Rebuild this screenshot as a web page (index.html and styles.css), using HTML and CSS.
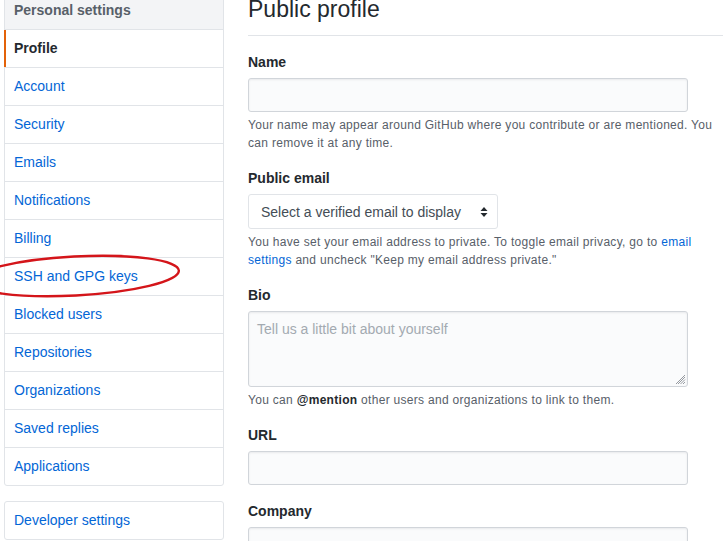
FILE: index.html
```html
<!DOCTYPE html>
<html lang="en">
<head>
<meta charset="utf-8">
<title>Public profile</title>
<link rel="stylesheet" href="styles.css">
</head>
<body>
<div class="page">
  <aside class="sidebar">
    <nav class="menu">
      <div class="menu-heading">Personal settings</div>
      <a class="menu-item selected" href="#">Profile</a>
      <a class="menu-item" href="#">Account</a>
      <a class="menu-item" href="#">Security</a>
      <a class="menu-item" href="#">Emails</a>
      <a class="menu-item" href="#">Notifications</a>
      <a class="menu-item" href="#">Billing</a>
      <a class="menu-item" href="#">SSH and GPG keys</a>
      <a class="menu-item" href="#">Blocked users</a>
      <a class="menu-item" href="#">Repositories</a>
      <a class="menu-item" href="#">Organizations</a>
      <a class="menu-item" href="#">Saved replies</a>
      <a class="menu-item" href="#">Applications</a>
    </nav>
    <nav class="menu dev">
      <a class="menu-item" href="#">Developer settings</a>
    </nav>
  </aside>
  <main class="main">
    <h2 class="title">Public profile</h2>
    <div class="group">
      <label class="label">Name</label>
      <input class="field" type="text">
      <p class="note">Your name may appear around GitHub where you contribute or are mentioned. You can remove it at any time.</p>
    </div>
    <div class="group">
      <label class="label">Public email</label>
      <div class="select">
        <span>Select a verified email to display</span>
        <svg class="updown" width="8" height="12" viewBox="0 0 8 12"><path d="M4 1 L7.5 5 H0.5 Z M4 11 L7.5 7 H0.5 Z" fill="#24292e"/></svg>
      </div>
      <p class="note">You have set your email address to private. To toggle email privacy, go to <a href="#">email settings</a> and uncheck "Keep my email address private."</p>
    </div>
    <div class="group">
      <label class="label">Bio</label>
      <div class="textarea">
        <span class="placeholder">Tell us a little bit about yourself</span>
        <svg class="grip" width="10" height="10" viewBox="0 0 10 10"><path d="M9 2 L2 9 M9 4.5 L4.5 9 M9 7 L7 9 M9 0 L0 9" stroke="#8a8f95" stroke-width="0.9"/></svg>
      </div>
      <p class="note">You can <strong>@mention</strong> other users and organizations to link to them.</p>
    </div>
    <div class="group">
      <label class="label">URL</label>
      <input class="field" type="text">
    </div>
    <div class="group">
      <label class="label">Company</label>
      <input class="field" type="text">
    </div>
  </main>
</div>
<svg class="annotation" width="200" height="60" viewBox="0 0 200 60">
  <ellipse cx="85" cy="30" rx="104" ry="19.5" transform="rotate(-3 85 30)" fill="none" stroke="#d4151a" stroke-width="2.4"/>
</svg>
</body>
</html>
```
FILE: styles.css
```css
html, body {
  margin: 0;
  padding: 0;
  background: #fff;
  overflow: hidden;
}
body {
  font-family: "Liberation Sans", Arial, sans-serif;
  font-size: 14px;
  color: #24292e;
  position: relative;
  height: 541px;
}
.page {
  display: flex;
  align-items: flex-start;
  gap: 24px;
  padding-left: 4px;
}
.sidebar {
  width: 220px;
  flex: none;
  display: flex;
  flex-direction: column;
  gap: 15px;
  margin-top: -9px;
}
.menu {
  border: 1px solid #e1e4e8;
  border-radius: 3px;
  display: flex;
  flex-direction: column;
  background: #fff;
}
.menu-heading {
  padding: 8px 9px;
  line-height: 21px;
  font-weight: bold;
  color: #586069;
  background: #f3f4f6;
  border-bottom: 1px solid #e1e4e8;
}
.menu-item {
  display: block;
  padding: 8px 9px;
  line-height: 21px;
  color: #0366d6;
  text-decoration: none;
  border-top: 1px solid #e1e4e8;
}
.menu-heading + .menu-item {
  border-top: none;
}
.menu-item.selected {
  color: #24292e;
  font-weight: bold;
  border-left: 2px solid #e36209;
  padding-left: 8px;
  margin-left: -1px;
}
.dev .menu-item {
  border-top: none;
}
.main {
  flex: 1;
  min-width: 0;
  margin-top: -10px;
}
.title {
  margin: 4px 0 16px;
  padding-bottom: 11px;
  font-size: 23px;
  font-weight: normal;
  line-height: 30px;
  border-bottom: 1px solid #e1e4e8;
}
.group {
  margin-bottom: 16px;
}
.label {
  display: block;
  font-weight: bold;
  line-height: 20px;
  margin-bottom: 6px;
}
.field {
  display: block;
  box-sizing: border-box;
  width: 440px;
  height: 34px;
  margin: 0;
  border: 1px solid #d1d5da;
  border-radius: 3px;
  background: #fafbfc;
  box-shadow: inset 0 1px 2px rgba(27, 31, 35, 0.075);
}
.note {
  margin: 4px 0 0;
  font-size: 12px;
  line-height: 18px;
  letter-spacing: 0.3px;
  color: #586069;
  width: 472px;
}
.note a {
  color: #0366d6;
  text-decoration: none;
}
.note strong {
  color: #24292e;
}
.select {
  box-sizing: border-box;
  width: 250px;
  height: 35px;
  border: 1px solid #e1e4e8;
  border-radius: 3px;
  background: #fff;
  display: flex;
  align-items: center;
  justify-content: space-between;
  padding: 0 9px 0 12px;
  color: #444d56;
}
.textarea {
  position: relative;
  box-sizing: border-box;
  width: 440px;
  height: 76px;
  border: 1px solid #d1d5da;
  border-radius: 3px;
  background: #fafbfc;
  box-shadow: inset 0 1px 2px rgba(27, 31, 35, 0.075);
  padding: 7px 8px;
  line-height: 20px;
}
.placeholder {
  color: #a3aab1;
}
.grip {
  position: absolute;
  right: 1px;
  bottom: 1px;
}
.annotation {
  position: absolute;
  left: -10px;
  top: 246px;
  overflow: visible;
}
```
